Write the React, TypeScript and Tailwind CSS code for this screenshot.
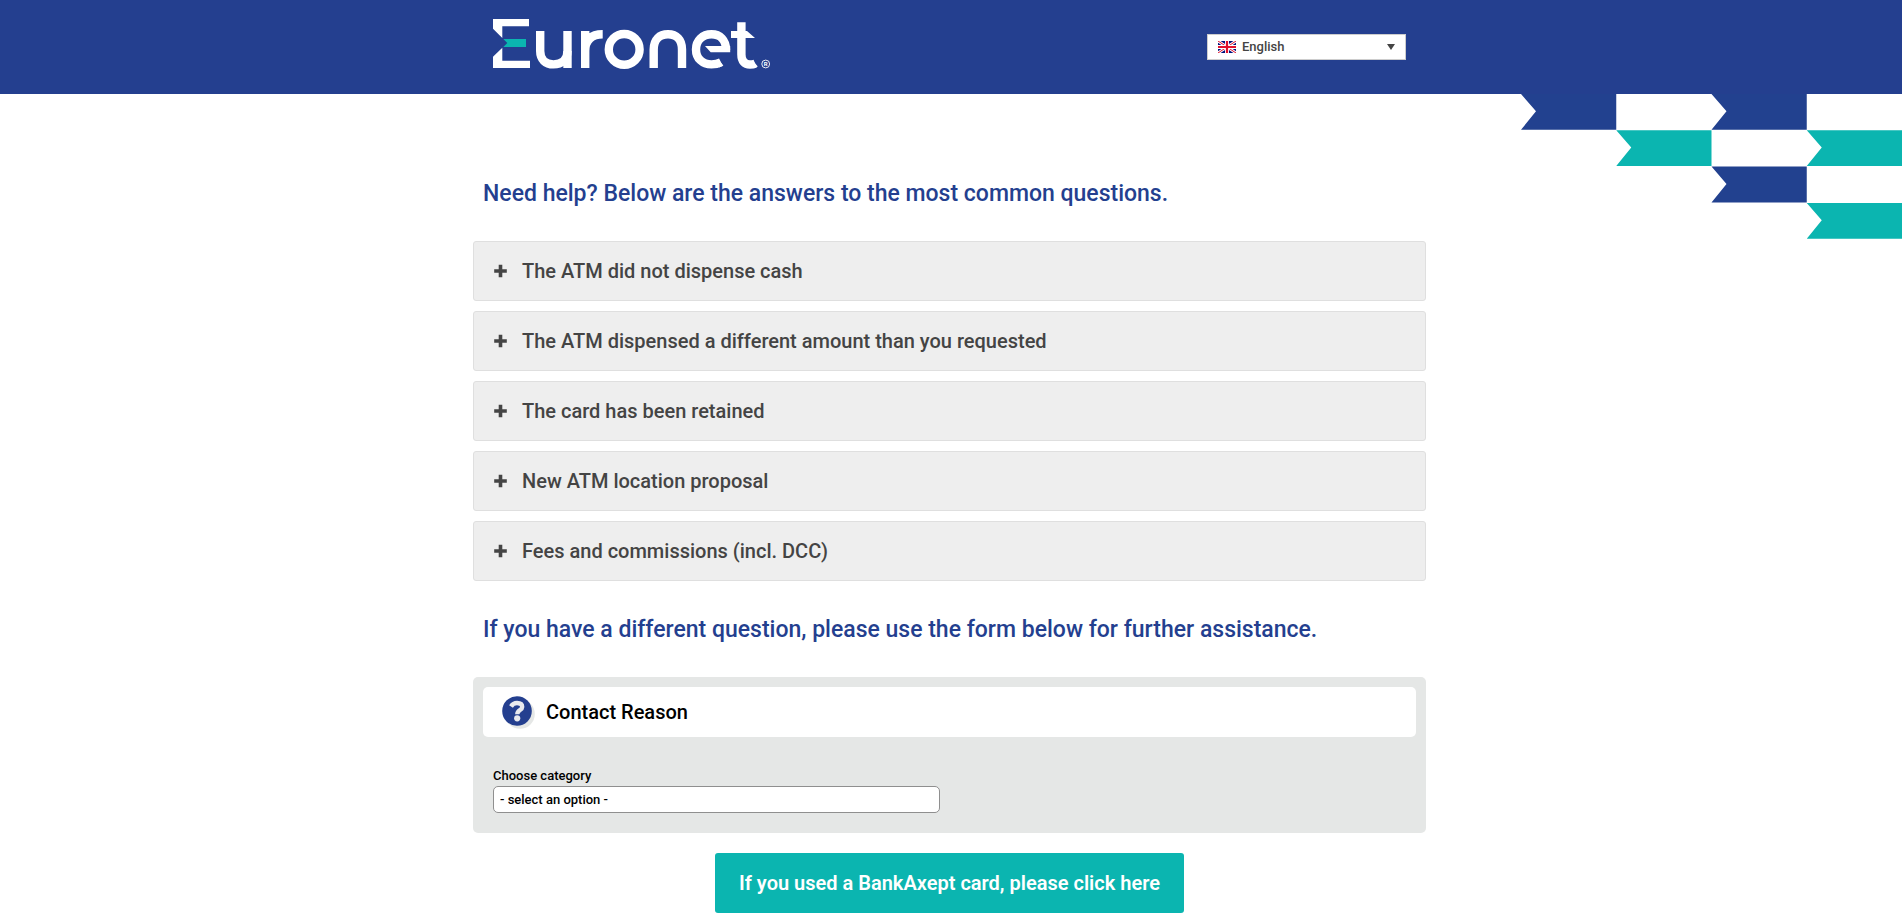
import React from "react";

const questions = [
  "The ATM did not dispense cash",
  "The ATM dispensed a different amount than you requested",
  "The card has been retained",
  "New ATM location proposal",
  "Fees and commissions (incl. DCC)",
];

function Logo() {
  return (
    <svg width="280" height="52" viewBox="0 0 280 52" role="img" aria-label="Euronet">
      <path fill="#fff" d="M0 0H36V7.300H9.300V19L0 9.700ZM0 49V37.700L9.300 28.700V41.700H37V49Z" />
      <path fill="#0bb5b0" d="M10.300 20H33V28H10.300L14.300 24Z" />
      <g fill="none" stroke="#fff" strokeWidth="8.400">
        <path d="M47.200 12V32C47.200 40.500 52.500 45.400 60.500 45.400S74.500 40.500 74.500 32" />
        <path d="M74.500 12V49" />
        <path d="M92.200 12V49M92.200 32C92.200 21 98 15.300 109.700 15.300" />
        <circle cx="131.200" cy="30.400" r="15.400" />
        <path d="M160.700 49V30.500C160.700 20.500 166.500 15.300 175 15.300S189 20.500 189 30.500V49" />
        <path d="M233 31C233 21 227 15.300 218.500 15.300C209.500 15.300 203 21.500 203 30.400C203 39.500 209.500 45.400 218.500 45.400C222 45.400 225.300 44.600 228 43.200" />
        <path d="M248.400 3.300V35.500C248.400 42 251.500 45.500 257 45.500C259.200 45.500 260.800 45.200 262.200 44.600" />
      </g>
      <path fill="#fff" d="M212 27H237.200V33.300H217.700ZM238 12H254L262 18.900H238ZM224 41.500L225.600 41L230.400 46.600L226 48.600ZM258 42L260 41.800L264.800 47.500L261 49.200Z" />
      <circle cx="272.700" cy="45" r="3.900" fill="none" stroke="#fff" strokeWidth="0.900" />
      <text x="272.700" y="47.200" textAnchor="middle" fill="#fff" fontSize="6" fontWeight="700">
        R
      </text>
    </svg>
  );
}

function Flag() {
  return (
    <svg width="18" height="12" viewBox="0 0 18 12" aria-hidden="true">
      <path fill="#01107d" d="M0 0H18V12H0Z" />
      <path stroke="#fff" strokeWidth="2.800" d="M0 0L18 12M18 0L0 12" />
      <path stroke="#e0102c" strokeWidth="1" d="M0 0L18 12M18 0L0 12" />
      <path stroke="#fff" strokeWidth="4" d="M9 0V12M0 6H18" />
      <path stroke="#e0102c" strokeWidth="2.200" d="M9 0V12M0 6H18" />
    </svg>
  );
}

function Plus() {
  return (
    <svg width="14" height="14" viewBox="0 0 14 14" aria-hidden="true">
      <path stroke="#444" strokeWidth="3.600" d="M6.500 0.700V13.300M0.200 7H12.800" />
    </svg>
  );
}

function QuestionMark() {
  return (
    <svg width="33" height="33" viewBox="0 0 33 33" aria-hidden="true">
      <circle cx="18" cy="18" r="14.800" fill="#e5e7e6" />
      <circle cx="15" cy="15" r="14.800" fill="#243f8f" />
      <path
        fill="none"
        stroke="#e9eaee"
        strokeWidth="4.400"
        d="M9 10.500C10.500 8 12.300 7 15 7C18.300 7 20.200 8.600 20.200 11C20.200 14.200 15.300 14 15.300 18.200"
      />
      <circle cx="15.200" cy="22.300" r="3.100" fill="#e9eaee" />
    </svg>
  );
}

function Pattern() {
  const tiles = [
    [0, 0, "#22418f"],
    [2, 0, "#22418f"],
    [1, 1, "#0bb5b0"],
    [3, 1, "#0bb5b0"],
    [2, 2, "#22418f"],
    [3, 3, "#0bb5b0"],
  ] as const;
  return (
    <svg className="absolute top-full right-0" width="381" height="146" viewBox="0 0 381 146" aria-hidden="true">
      {tiles.map(([c, r, fill]) => (
        <path
          key={`${c}-${r}`}
          fill={fill}
          transform={`translate(${c * 95.25} ${r * 36.3})`}
          d="M0 0H95.250V35.800H0L15 17.300Z"
        />
      ))}
    </svg>
  );
}

export default function App() {
  return (
    <div className="bg-white font-['Roboto',sans-serif] font-medium text-black">
      <header className="relative bg-[#243f8f]">
        <div className="mx-auto flex h-[94px] max-w-[956px] items-center justify-between pr-[23px] pl-5">
          <a href="#home" className="-mt-1 block">
            <Logo />
          </a>
          <button
            type="button"
            className="flex h-[26px] w-[199px] items-center border border-[#cdcdcd] bg-white px-2.5 text-[13px] text-[#444]"
          >
            <Flag />
            <span className="ml-1.5">English</span>
            <svg className="ml-auto" width="8" height="6" viewBox="0 0 8 6" aria-hidden="true">
              <path fill="#444" d="M0 0H8L4 6Z" />
            </svg>
          </button>
        </div>
        <Pattern />
      </header>
      <main className="mx-auto max-w-[956px] pr-[3px]">
        <h1 className="px-2.5 pt-[85px] text-[23px] leading-[30px] text-[#243f8f]">
          Need help? Below are the answers to the most common questions.
        </h1>
        <ul className="mt-8 flex flex-col gap-2.5">
          {questions.map((q) => (
            <li key={q}>
              <button
                type="button"
                className="flex h-[60px] w-full items-center gap-3.5 rounded-[3px] border border-[#dfdfdf] bg-[#eee] px-5 text-left text-[20px] text-[#444]"
              >
                <Plus />
                {q}
              </button>
            </li>
          ))}
        </ul>
        <h2 className="mt-[34px] px-2.5 text-[23px] leading-[30px] text-[#243f8f]">
          If you have a different question, please use the form below for further assistance.
        </h2>
        <section className="mt-8 rounded-[5px] bg-[#e5e7e6] p-2.5 pb-5">
          <div className="flex h-[50px] items-center gap-[11px] rounded-[5px] bg-white px-[19px]">
            <QuestionMark />
            <h3 className="text-[20px]">Contact Reason</h3>
          </div>
          <div className="mt-[29px] px-2.5 text-[13px]">
            <label htmlFor="category" className="block leading-5">
              Choose category
            </label>
            <select
              id="category"
              className="block h-[27px] w-[447px] max-w-full appearance-none rounded-[5px] border border-[#8f8f8f] bg-white px-1.5"
            >
              <option>- select an option -</option>
            </select>
          </div>
        </section>
        <div className="mt-5 flex justify-center pb-[3px]">
          <a
            href="#bankaxept"
            className="flex h-[60px] w-[469px] items-center justify-center rounded-[3px] bg-[#0bb5b0] text-[20px] font-semibold text-white"
          >
            If you used a BankAxept card, please click here
          </a>
        </div>
      </main>
    </div>
  );
}
